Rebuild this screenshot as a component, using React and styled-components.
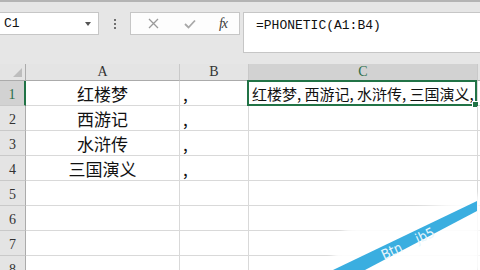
import React from 'react';
import styled, { createGlobalStyle } from 'styled-components';

const GlobalStyle = createGlobalStyle`
  html, body { margin: 0; padding: 0; }
  body {
    width: 480px;
    height: 270px;
    overflow: hidden;
    background: #e6e6e6;
    font-family: "Noto Sans CJK SC", sans-serif;
  }
`;

const Page = styled.div`
  position: relative;
  width: 480px;
  height: 270px;
  overflow: hidden;
  background: #e6e6e6;
`;

const TopLine = styled.div`
  height: 2px;
  background: #b4b4b4;
`;

const Toolbar = styled.div`
  display: flex;
  align-items: flex-start;
  height: 62px;
  padding-top: 10px;
  box-sizing: border-box;
`;

const NameBox = styled.div`
  position: relative;
  width: 99px;
  height: 23px;
  box-sizing: border-box;
  background: #fff;
  border: 1px solid #c6c6c6;
  border-left: none;
  display: flex;
  align-items: center;
  padding-left: 4px;
  font: 13px "Liberation Mono", monospace;
  color: #111;
`;

const Arrow = styled.span`
  margin-left: auto;
  margin-right: 7px;
  width: 0;
  height: 0;
  border-left: 3.5px solid transparent;
  border-right: 3.5px solid transparent;
  border-top: 4px solid #555;
`;

const Dots = styled.div`
  width: 31px;
  height: 23px;
  display: flex;
  flex-direction: column;
  align-items: center;
  justify-content: center;
  gap: 2px;
  span {
    width: 2px;
    height: 2px;
    background: #6f6f6f;
  }
`;

const ButtonGroup = styled.div`
  width: 110px;
  height: 23px;
  box-sizing: border-box;
  background: #fdfdfd;
  border: 1px solid #c6c6c6;
  display: grid;
  grid-template-columns: 40px 34px 1fr;
  align-items: center;
  justify-items: center;
  padding-left: 2px;
`;

const Fx = styled.span`
  font: italic 14px "Liberation Serif", serif;
  color: #3a3a3a;
  letter-spacing: -1px;
`;

const FormulaBox = styled.div`
  flex: 1;
  margin-left: 3px;
  height: 41px;
  box-sizing: border-box;
  background: #fff;
  border: 1px solid #c6c6c6;
  border-right: none;
  padding: 5px 0 0 12px;
  font: 13px "Liberation Mono", monospace;
  color: #111;
`;

const Sheet = styled.div`
  display: grid;
  grid-template-columns: 26px 154px 69px 229px 1fr;
  grid-template-rows: 17px repeat(8, 25px);
  background: #fff;
`;

const Corner = styled.div`
  position: relative;
  background: #e4e4e4;
  border-right: 1px solid #ababab;
  border-bottom: 1px solid #ababab;
  box-sizing: border-box;
  &::after {
    content: "";
    position: absolute;
    right: 3px;
    bottom: 3px;
    width: 0;
    height: 0;
    border-left: 9px solid transparent;
    border-bottom: 9px solid #bdbdbd;
  }
`;

const ColHead = styled.div`
  background: ${p => (p.$active ? '#d2d2d2' : '#e4e4e4')};
  color: ${p => (p.$active ? '#2b6e48' : '#333')};
  border-right: 1px solid #c9c9c9;
  border-bottom: 1px solid #ababab;
  box-sizing: border-box;
  display: flex;
  align-items: center;
  justify-content: center;
  font: 14px "Liberation Serif", serif;
`;

const RowHead = styled.div`
  background: ${p => (p.$active ? '#d2d2d2' : '#e4e4e4')};
  color: ${p => (p.$active ? '#2b6e48' : '#333')};
  border-right: ${p => (p.$active ? '2px solid #217346' : '1px solid #ababab')};
  border-bottom: 1px solid #c9c9c9;
  box-sizing: border-box;
  display: flex;
  align-items: center;
  justify-content: center;
  padding-top: 4px;
  font: 14px "Liberation Serif", serif;
`;

const Cell = styled.div`
  position: relative;
  border-right: 1px solid #d9d9d9;
  border-bottom: 1px solid #d9d9d9;
  box-sizing: border-box;
  display: flex;
  align-items: center;
  justify-content: ${p => (p.$center ? 'center' : 'flex-start')};
  padding-left: ${p => (p.$center ? '0' : '3px')};
  font-size: ${p => p.$size || 17}px;
  font-family: "Noto Sans CJK SC", sans-serif;
  color: #111;
  white-space: nowrap;
  overflow: visible;
`;

const Selection = styled.div`
  position: absolute;
  left: -2px;
  top: -1px;
  right: 0;
  bottom: -1px;
  border: 2px solid #217346;
  pointer-events: none;
  &::after {
    content: "";
    position: absolute;
    right: -4px;
    bottom: -4px;
    width: 5px;
    height: 5px;
    background: #217346;
    border: 1px solid #fff;
  }
`;

const Watermark = styled.svg`
  position: absolute;
  left: 320px;
  top: 190px;
  width: 160px;
  height: 80px;
`;

const books = ['红楼梦', '西游记', '水浒传', '三国演义'];

export default function App() {
  const rows = Array.from({ length: 8 }, (_, i) => i + 1);
  return (
    <Page>
      <GlobalStyle />
      <TopLine />
      <Toolbar>
        <NameBox>
          C1
          <Arrow />
        </NameBox>
        <Dots>
          <span />
          <span />
          <span />
        </Dots>
        <ButtonGroup>
          <svg width="11" height="11" viewBox="0 0 11 11">
            <path d="M1 1 L10 10 M10 1 L1 10" stroke="#9a9a9a" strokeWidth="1.3" />
          </svg>
          <svg width="12" height="10" viewBox="0 0 12 10">
            <path d="M1 5 L4.5 8.5 L11 1.5" stroke="#a8a8a8" strokeWidth="1.8" fill="none" />
          </svg>
          <Fx>fx</Fx>
        </ButtonGroup>
        <FormulaBox>=PHONETIC(A1:B4)</FormulaBox>
      </Toolbar>
      <Sheet>
        <Corner />
        <ColHead>A</ColHead>
        <ColHead>B</ColHead>
        <ColHead $active>C</ColHead>
        <ColHead />
        {rows.map(r => (
          <React.Fragment key={r}>
            <RowHead $active={r === 1}>{r}</RowHead>
            <Cell $center>{books[r - 1] || ''}</Cell>
            <Cell>{books[r - 1] ? ',' : ''}</Cell>
            <Cell $size={15}>
              {r === 1 ? '红楼梦, 西游记, 水浒传, 三国演义,' : ''}
              {r === 1 && <Selection />}
            </Cell>
            <Cell />
          </React.Fragment>
        ))}
      </Sheet>
      <Watermark viewBox="320 190 160 80">
        <defs>
          <filter id="soft" x="-20%" y="-20%" width="140%" height="140%">
            <feGaussianBlur stdDeviation="3" />
          </filter>
        </defs>
        <polygon
          points="330,262 345,228 440,204 482,194 482,272 330,272"
          fill="#fff"
          opacity="0.92"
          filter="url(#soft)"
        />
        <polygon points="333,270 477,201 477,211 365,270" fill="#3aaee0" />
        <g fill="#e8f6fc" fontFamily="DejaVu Sans Condensed, sans-serif" fontSize="14">
          <text x="384" y="260" transform="rotate(-25 384 260)">Btn</text>
          <text x="418" y="244" transform="rotate(-25 418 244)">jb5</text>
        </g>
      </Watermark>
    </Page>
  );
}
